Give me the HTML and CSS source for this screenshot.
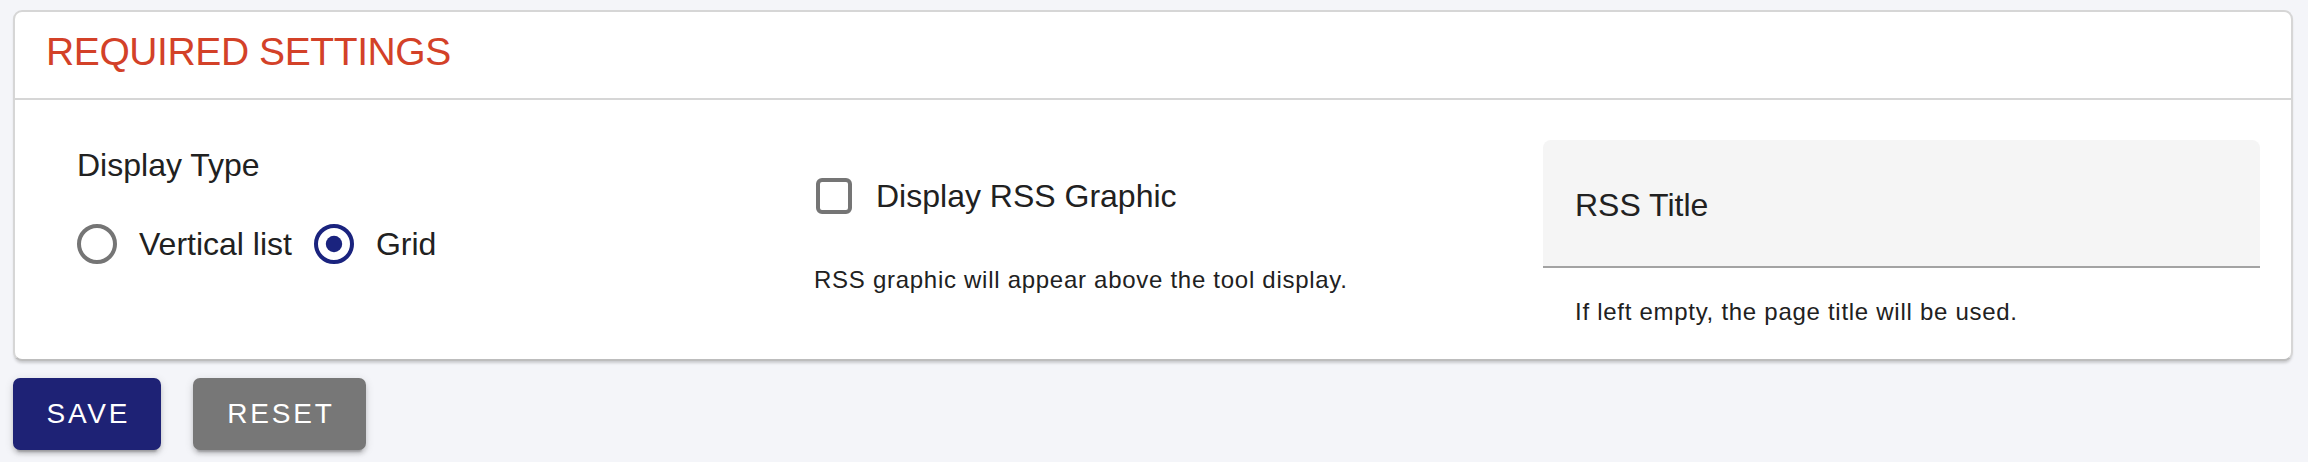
FILE: index.html
```html
<!DOCTYPE html>
<html lang="en">
<head>
<meta charset="utf-8">
<title>Required Settings</title>
<link rel="stylesheet" href="styles.css">
</head>
<body>
<div class="page">
  <section class="card">
    <header class="card-header">REQUIRED SETTINGS</header>
    <div class="card-body">
      <div class="col col-type">
        <div class="form-label">Display Type</div>
        <div class="radio-group">
          <label class="option">
            <span class="control">
              <svg class="icon" viewBox="0 0 24 24"><circle cx="12" cy="12" r="9" fill="none" stroke="#757575" stroke-width="2"/></svg>
            </span>
            <span class="option-text">Vertical list</span>
          </label>
          <label class="option">
            <span class="control">
              <svg class="icon" viewBox="0 0 24 24"><circle cx="12" cy="12" r="9" fill="none" stroke="#1a237e" stroke-width="2"/><circle cx="12" cy="12" r="4.1" fill="#1a237e"/></svg>
            </span>
            <span class="option-text">Grid</span>
          </label>
        </div>
      </div>
      <div class="col col-graphic">
        <label class="option option-check">
          <span class="control">
            <svg class="icon" viewBox="0 0 24 24"><rect x="4" y="4" width="16" height="16" rx="2" fill="none" stroke="#757575" stroke-width="2"/></svg>
          </span>
          <span class="option-text">Display RSS Graphic</span>
        </label>
        <p class="helper helper-graphic">RSS graphic will appear above the tool display.</p>
      </div>
      <div class="col col-title">
        <div class="field">
          <span class="field-label">RSS Title</span>
        </div>
        <p class="helper helper-title">If left empty, the page title will be used.</p>
      </div>
    </div>
  </section>
  <div class="actions">
    <button class="btn btn-save" type="button">Save</button>
    <button class="btn btn-reset" type="button">Reset</button>
  </div>
</div>
</body>
</html>
```
FILE: styles.css
```css
* {
  box-sizing: border-box;
}

html, body {
  margin: 0;
  padding: 0;
}

body {
  width: 2308px;
  height: 462px;
  overflow: hidden;
  background: #f4f5f9;
  font-family: "Liberation Sans", Arial, Helvetica, sans-serif;
  color: #212121;
}

.page {
  padding: 10px 15px 0 13px;
}

.card {
  background: #ffffff;
  border: 2px solid #d6d6d6;
  border-bottom-color: #bdbdbd;
  border-radius: 9px;
  box-shadow: 0 3px 3px -1px rgba(0, 0, 0, 0.18);
  height: 351px;
  display: flex;
  flex-direction: column;
}

.card-header {
  height: 88px;
  padding: 0 31px;
  line-height: 79px;
  font-size: 39px;
  letter-spacing: -0.4px;
  color: #d34128;
  border-bottom: 2px solid #d6d6d6;
}

.card-body {
  flex: 1;
  display: grid;
  grid-template-columns: 721px 713px 1fr;
  column-gap: 16px;
  padding: 0 31px 0 62px;
}

.col {
  display: flex;
  flex-direction: column;
  align-items: flex-start;
}

.col-type {
  padding-top: 45px;
}

.col-graphic {
  padding-top: 53.5px;
}

.col-title {
  padding-top: 40px;
  align-items: stretch;
}

.form-label {
  font-size: 32px;
  line-height: 40px;
  height: 40px;
}

.radio-group {
  display: flex;
  margin-top: 16.5px;
  margin-left: -22px;
}

.option {
  display: flex;
  align-items: center;
  height: 84px;
}

.option-check {
  margin-left: -22px;
}

.control {
  width: 84px;
  height: 84px;
  padding: 18px;
  display: flex;
}

.icon {
  width: 48px;
  height: 48px;
  display: block;
}

.option-text {
  font-size: 32px;
  line-height: 40px;
  letter-spacing: 0;
}

.helper {
  margin: 0;
  font-size: 24px;
  line-height: 32px;
  letter-spacing: 0.72px;
  color: #212121;
}

.helper-graphic {
  margin-top: 26px;
}

.field {
  height: 128px;
  background: #f5f5f5;
  border-radius: 8px 8px 0 0;
  border-bottom: 2px solid #a3a3a3;
  padding: 45px 32px 0;
}

.field-label {
  display: block;
  font-size: 32px;
  line-height: 40px;
  color: #212121;
}

.helper-title {
  margin-top: 28px;
  padding-left: 32px;
}

.actions {
  display: flex;
  gap: 32px;
  margin-top: 17px;
}

.btn {
  height: 72px;
  border: none;
  border-radius: 7px;
  padding: 0;
  font-family: "Liberation Sans", Arial, Helvetica, sans-serif;
  font-size: 28px;
  line-height: 72px;
  letter-spacing: 2.8px;
  text-indent: 2.8px;
  text-transform: uppercase;
  color: #ffffff;
  text-align: center;
  box-shadow: 0 6px 2px -4px rgba(0, 0, 0, 0.2), 0 4px 4px 0 rgba(0, 0, 0, 0.14), 0 2px 10px 0 rgba(0, 0, 0, 0.12);
}

.btn-save {
  width: 148px;
  background: #1e2275;
}

.btn-reset {
  width: 173px;
  background: #777777;
}
```
